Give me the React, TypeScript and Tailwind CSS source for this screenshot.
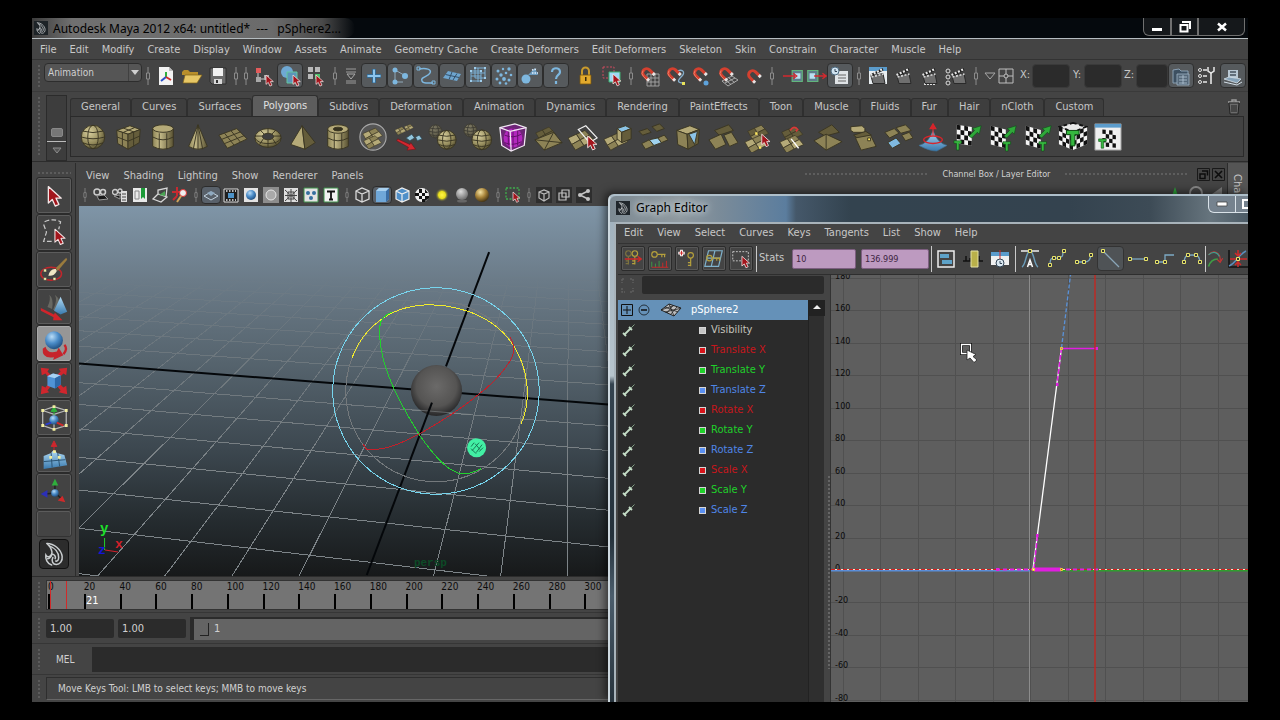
import React from "react";

type Kids = { children?: React.ReactNode };

/* ---------- icon primitives ---------- */

function Ico({ children, s = 24, v = 24 }: Kids & { s?: number; v?: number }) {
  return (
    <svg width={s} height={s} viewBox={`0 0 ${v} ${v}`} fill="none" aria-hidden="true" className="shrink-0">
      {children}
    </svg>
  );
}

function RedArrow({ x, y, k = 1 }: { x: number; y: number; k?: number }) {
  return (
    <path
      transform={`translate(${x} ${y}) scale(${k})`}
      d="M0 0V12.5L3 9.8L5.2 14.8L8 13.5L5.8 8.8H9.8Z"
      fill="#a3151c"
      stroke="#f3e6e6"
      strokeWidth={1}
      strokeLinejoin="round"
    />
  );
}

function MayaLogo({ s = 24 }: { s?: number }) {
  return (
    <Ico s={s}>
      <g stroke="#c9cdcf" strokeWidth={1.3} strokeLinecap="round">
        <path d="M6 3C12 3 18 8 19 14C19.500 18 17 21 14 21C11 21 9.500 18 11 15" />
        <path d="M6 3C9 6 11 9 10 12C9 15 6 15 5 13C4.500 16 6 20 10 21.500" />
        <path d="M8 5C13 7 16 11 16 15C16 17 15 18.500 13.500 18" />
        <path d="M10 12C12 12 14 14 13 16M6.500 16C8 16 9 15 10 13" />
      </g>
    </Ico>
  );
}

function Magnet({ children }: Kids) {
  return (
    <Ico>
      {children}
      <g transform="rotate(-45 9 9)">
        <path d="M5 15V8.500A4 4 0 0 1 13 8.500V15" stroke="#d5402f" strokeWidth={3} />
        <path d="M4 15V9A4.500 4.500 0 0 1 8 4.500" stroke="#f08a72" strokeWidth={0.8} />
        <path d="M3.500 13.200H6.500V16H3.500ZM11.500 13.200H14.500V16H11.500Z" fill="#e4e4e4" />
      </g>
    </Ico>
  );
}

function Clapper({ children, x = 0 }: Kids & { x?: number }) {
  return (
    <Ico>
      {children}
      <g transform={`translate(${x} 0)`}>
        <path d="M5 12L17 9.500L19 19.500H7Z" fill="#6f6f6f" stroke="#2a2a2a" />
        <path d="M4 10.500L16.500 4L17.500 6.500L5 12.500Z" fill="#1c1c1c" />
        <path d="M4.500 11L17 5" stroke="#e8e8e8" strokeWidth={2.200} strokeDasharray="2 1.600" />
        <path d="M5.500 13L17.500 10" stroke="#d8d8d8" strokeWidth={1.600} strokeDasharray="2 1.600" />
      </g>
    </Ico>
  );
}

const K1 = "#b5aa78";
const K2 = "#8d8356";
const K3 = "#655d3b";
const KD = "#3a3522";

function Quad({ x = 0, y = 0, k = 1, a = K1, b = K2 }: { x?: number; y?: number; k?: number; a?: string; b?: string }) {
  return (
    <g transform={`translate(${x} ${y}) scale(${k})`} stroke={KD} strokeWidth={0.9}>
      <path d="M0 6L9 2L13 8L4 13Z" fill={a} />
      <path d="M9 2L18 -2L23 3L13 8Z" fill={b} />
      <path d="M4 13L13 8L17 14L8 19Z" fill={b} />
      <path d="M13 8L23 3L28 9L17 14Z" fill={a} />
    </g>
  );
}

function GlobeShape({ x, y, r, o = 1 }: { x: number; y: number; r: number; o?: number }) {
  return (
    <g transform={`translate(${x} ${y})`} opacity={o} stroke={KD} strokeWidth={1}>
      <circle r={r} fill="url(#khaki)" />
      <ellipse rx={r * 0.45} ry={r} />
      <path d={`M${-r} 0Q0 ${r * 0.3} ${r} 0M${-r * 0.85} ${-r * 0.5}Q0 ${-r * 0.25} ${r * 0.85} ${-r * 0.5}M${-r * 0.85} ${r * 0.5}Q0 ${r * 0.85} ${r * 0.85} ${r * 0.5}`} />
    </g>
  );
}

function Checks({ d, n = 4 }: { d: string; n?: number }) {
  const cells = [];
  for (let i = 0; i < n; i++) for (let j = 0; j < n; j++) if ((i + j) % 2 === 0) cells.push(<rect key={`${i}${j}`} x={i * 4} y={j * 5} width={4} height={5} fill="#111" />);
  return (
    <g transform={d}>
      <rect width={n * 4} height={n * 5} fill="#f4f4f4" />
      {cells}
    </g>
  );
}

const GreenT = ({ x, y, k = 1 }: { x: number; y: number; k?: number }) => (
  <path transform={`translate(${x} ${y}) scale(${k})`} d="M0 0H9V3H6V11H3V3H0Z" fill="#35b83f" stroke="#0e4a14" strokeWidth={0.7} />
);
const GreenArrow = () => <path d="M17 15L23 9L20.500 7L30 4L28 13L26 11L20 17Z" fill="#2fa83a" stroke="#11501a" strokeWidth={0.7} />;

/* ---------- shelf ---------- */

const shelf: [string, React.ReactNode][] = [
  ["Polygon Sphere", <GlobeShape x={16} y={16} r={12.500} />],
  ["Polygon Cube", <g stroke={KD}><path d="M4 9L18 4L29 8L16 13Z" fill={K1} /><path d="M4 9L16 13V29L5 23Z" fill={K2} /><path d="M16 13L29 8L28 22L16 29Z" fill={K3} /><path d="M11 6.500L22 10.500V26M10 11V26M11 11L23 6M4.500 16L16 20.500L28.500 15" /></g>],
  ["Polygon Cylinder", <g stroke={KD}><path d="M5 7V26Q16 32 27 26V7Z" fill="url(#khakiH)" /><ellipse cx={16} cy={7} rx={11} ry={4} fill={K1} /><path d="M5 16Q16 22 27 16M12 12V29M20 12V29" /></g>],
  ["Polygon Cone", <g stroke={KD}><path d="M16 3L6 26Q16 32 26 26Z" fill="url(#khakiH)" /><path d="M16 3L11 29M16 3L16 29M16 3L21 29" /></g>],
  ["Polygon Plane", <g stroke={KD}><path d="M1 14L20 7L31 18L10 28Z" fill={K2} /><path d="M7 12L17 24.500M14 9.500L24 21.500M4 18.500L24 10.500M7 23L28 14.500" /></g>],
  ["Polygon Torus", <g stroke={KD}><ellipse cx={16} cy={17} rx={14} ry={10} fill="url(#khaki)" /><ellipse cx={16} cy={15.500} rx={6} ry={3.500} fill="#3f3f3f" /><path d="M2 17Q5 23 16 23Q27 23 30 17M8 9L12 13M24 9L20 13M16 7V12M7 24L11 18M25 24L21 18M16 27V19M2 15L10 15M30 15L22 15" /></g>],
  ["Polygon Pyramid", <g stroke={KD}><path d="M15 4L3 24L18 29Z" fill={K1} /><path d="M15 4L18 29L29 22Z" fill={K3} /></g>],
  ["Polygon Pipe", <g stroke={KD}><path d="M5 8V26Q16 32 27 26V8Z" fill="url(#khakiH)" /><ellipse cx={16} cy={7.500} rx={11} ry={4.500} fill={K1} /><ellipse cx={16} cy={7.500} rx={5} ry={2} fill="#36321f" /><path d="M5 17Q16 23 27 17M12 12V29M20 12V29" /></g>],
  ["Combine", <g><circle cx={16} cy={16} r={14} fill="#565656" stroke="#a9a9a9" strokeWidth={1.200} /><Quad x={5} y={8} k={0.75} /><Quad x={6} y={16} k={0.68} /></g>],
  ["Extract", <g><Quad x={2} y={6} k={0.42} /><Quad x={12} y={3} k={0.35} /><path d="M14 17L20 13L23 17L18 20ZM24 16L28 14L31 18L26 20Z" fill="#93c6dd" stroke="#2f4b58" strokeWidth={0.8} /><path d="M5 18L18 24L19 22L24 29L15 30L16.500 27L4 20Z" fill="#d3272f" stroke="#701015" strokeWidth={0.6} /></g>],
  ["Mirror Geometry", <g><GlobeShape x={8} y={10} r={7} o={0.4} /><GlobeShape x={20} y={19} r={10} /></g>],
  ["Smooth", <g><GlobeShape x={8} y={9} r={7} o={0.45} /><GlobeShape x={20} y={19} r={10.500} /></g>],
  ["Subdiv Proxy", <g><path d="M2 6L18 2L30 6L28 25L14 31L4 25Z" fill="#6e2577" stroke="#f3e9f5" strokeWidth={1.300} /><circle cx={16} cy={17} r={10} fill="#b227bd" /><path d="M16 7V27M7 14Q16 18 25 13M7 22Q16 26 25 21M11 9V25M21 9V25" stroke="#5f0f68" /><path d="M2 6L13 10L30 6M13 10L14 31" stroke="#f3e9f5" strokeWidth={1.300} /></g>],
  ["Triangulate", <g><Quad x={3} y={7} k={0.78} a={K3} b={K3} /><path d="M2 19L22 11L31 22L12 30Z" fill={K2} stroke={KD} /><path d="M2 19L31 22M12 30L22 11" stroke={KD} /></g>],
  ["Split Polygon", <g><Quad x={0} y={11} k={1} /><path d="M11 8L19 4L31 17L23 22Z" stroke="#f2f2f2" strokeWidth={1.300} /><RedArrow x={21} y={15} /></g>],
  ["Extrude", <g><Quad x={1} y={13} k={0.9} /><path d="M15 7L24 4L30 7L20 11Z" fill="#8cc4e6" stroke={KD} /><path d="M15 7L20 11V22L15 18Z" fill={K1} stroke={KD} /><path d="M20 11L30 7V18L20 22Z" fill={K3} stroke={KD} /></g>],
  ["Bridge", <g><path d="M1 10L10 7L14 11L5 14ZM15 5L23 2L28 7L20 10Z" fill={K3} stroke={KD} /><path d="M4 23L12 19L17 25L8 29ZM21 17L28 14L32 19L25 22Z" fill={K2} stroke={KD} /><path d="M12 19L21 17L25 22L17 25Z" fill="#9fd2ee" stroke={KD} /></g>],
  ["Append", <g stroke={KD}><path d="M4 9L18 4L28 8L15 13Z" fill={K1} /><path d="M4 9L15 13L16 29L5 24Z" fill={K2} /><path d="M15 13L28 8L27 23L16 29Z" fill={K3} /><path d="M17 13L26 10L23 24Z" fill="#8cc4e6" /></g>],
  ["Cut Faces", <g stroke={KD}><path d="M7 9L22 3L27 9L12 14Z" fill={K3} /><path d="M1 19L14 13L19 24L8 29ZM17 14L25 11L32 22L23 26Z" fill={K2} /></g>],
  ["Interactive Split", <g><Quad x={5} y={5} k={0.8} a={K3} b={K2} /><Quad x={2} y={16} k={0.9} /><path d="M13 11H15.500V13.500H13ZM17 26H19.500V28.500H17Z" fill="#ffe860" /><RedArrow x={20} y={13} k={0.9} /></g>],
  ["Insert Edge Loop", <g><Quad x={4} y={6} k={0.8} a={K3} b={K3} /><Quad x={2} y={16} k={0.9} /><path d="M13 9Q17 3 21 8L19 10" stroke="#d9383a" strokeWidth={1.800} /><path d="M14 18L22 28" stroke="#fff" strokeWidth={1.400} /></g>],
  ["Offset Edge", <g stroke={KD}><path d="M6 11L20 3L28 11L13 15Z" fill={K3} /><path d="M1 20L14 13L31 21L14 30Z" fill={K2} /><path d="M14 13V30" /></g>],
  ["Bevel", <g stroke={KD}><path d="M3 5L15 4L18 7V11H6L3 9Z" fill={K1} /><path d="M6 14L19 10L25 14L11 18Z" fill={K3} /><path d="M8 17L24 14L30 26L14 30Z" fill={K2} /><path d="M21 17H24V20H21Z" fill="#ffe860" /></g>],
  ["Merge", <g stroke={KD}><path d="M2 11L12 7L17 12L7 17ZM14 6L24 3L30 9L19 12ZM20 14L28 11L32 17L24 20Z" fill={K2} /><path d="M5 22L14 17L19 23L10 28Z" fill="#7fb9e0" /></g>],
  ["Sculpt Geometry", <g><path d="M1 25Q12 22 16 9Q20 22 31 25L20 31Q12 31 1 25Z" fill="url(#blueV)" stroke="#3f6f92" strokeWidth={0.7} /><ellipse cx={16} cy={19} rx={10} ry={4} stroke="#d8252b" strokeWidth={1.500} /><path d="M16 14V5M13 7L16 2L19 7Z" stroke="#d8252b" fill="#d8252b" strokeWidth={1.300} /></g>],
  ["Planar Mapping", <g><Checks d="translate(4 3) skewY(8)" /><GreenArrow /><GreenT x={1} y={20} k={0.9} /></g>],
  ["Cylindrical Mapping", <g><Checks d="translate(3 4) skewY(14)" /><GreenArrow /><GreenT x={16} y={21} k={0.9} /></g>],
  ["Spherical Mapping", <g><Checks d="translate(3 4) skewY(16)" /><GreenArrow /><GreenT x={17} y={21} k={0.9} /></g>],
  ["Automatic Mapping", <g><Checks d="translate(1 5) skewY(22) scale(.94)" /><Checks d="translate(16 11) skewY(-22) scale(.94)" /><path d="M16 1L30 5L16 11L2 5Z" fill="#e9e9e9" stroke="#111" strokeWidth={2} strokeDasharray="4 3" /><GreenT x={9} y={9} k={1.500} /></g>],
  ["UV Texture Editor", <g><path d="M2 2H30V30H2Z" fill="#efefef" stroke="#8a8a8a" /><path d="M2 2H30V6H2Z" fill="#5b9ccc" /><Checks d="translate(10 8) skewY(6) scale(.9)" /><GreenT x={6} y={18} k={0.9} /></g>],
];

/* ---------- status line ---------- */

const W = "#e6e6e6";
const B = "#7db7df";

const icons: Record<string, React.ReactNode> = {
  "New Scene": <Ico><path d="M5 3H15L19 7V21H5Z" fill="#f3f3f3" /><path d="M15 3V7H19Z" fill="#bdbdbd" /><path d="M12 8V13" stroke="#2fae3c" strokeWidth={2} /><path d="M12 13L7 17" stroke="#2b50c8" strokeWidth={2} /><path d="M12 13L17 16" stroke="#d02a2a" strokeWidth={2} /></Ico>,
  "Open Scene": <Ico><path d="M2 8L4 6H8L10 8H18V11H2Z" fill="#b98f2b" /><path d="M5 11H22L17 19H3Z" fill="#e7c765" stroke="#7f6119" strokeWidth={0.700} /></Ico>,
  "Save Scene": <Ico><path d="M4 4H20V20H6L4 18Z" fill="#6a6a6a" stroke="#2c2c2c" /><path d="M7 4H17V12H7Z" fill="#f1f1f1" /><path d="M8 15H16V20H8Z" fill="#d8d8d8" /><path d="M10 16H12V19H10Z" fill="#333" /></Ico>,
  "Select by Hierarchy": <Ico><path d="M4 4H9V9H4Z" fill="#e25b5b" /><path d="M4 13H9V18H4ZM12 11H17V16H12Z" fill="#a9a9a9" /><path d="M6 9V13M9 15H12" stroke="#ccc" /><RedArrow x={14} y={11} k={0.75} /></Ico>,
  "Select by Object": <Ico><circle cx={9} cy={8} r={6} fill="#6fa9d4" /><path d="M9 8H19V19H9Z" fill="#5c95b8" stroke="#63c7a0" /><RedArrow x={15} y={11} k={0.75} /></Ico>,
  "Select by Component": <Ico><path d="M4 3H9V8H4ZM11 3H16V8H11ZM4 10H9V15H4Z" fill="#b9b9b9" /><path d="M11 10H16V15H11Z" fill="#4cc06a" /><RedArrow x={12} y={11} k={0.75} /></Ico>,
  Collapse: <Ico s={18} v={18}><path d="M4 2H14M4 5H14M4 14H14M4 16H14" stroke="#9b9b9b" /><path d="M5 7H13L9 12Z" stroke="#aaa" /></Ico>,
  Handles: <Ico><path d="M12 5V19M5 12H19" stroke="#356a92" strokeWidth={4} /><path d="M12 5.500V18.500M5.500 12H18.500" stroke="#8cc4ec" strokeWidth={2} /></Ico>,
  Joints: <Ico><path d="M7 6V18M7 6L16 11M7 18H15" stroke="#8fa9bb" /><circle cx={7} cy={6} r={2.500} fill={B} /><circle cx={17} cy={12} r={3} fill={B} /><circle cx={7} cy={18} r={2.500} fill={B} /></Ico>,
  Curves: <Ico><path d="M5 5C12 4 18 5 16 9C14 13 6 13 8 17C9 20 14 19 19 19" stroke={B} strokeWidth={1.500} /><path d="M3 3H6V6H3ZM18 17H21V20H18Z" stroke={B} /></Ico>,
  Surfaces: <Ico><path d="M3 14L8 7L21 10L17 17Z" fill="#6ea5cf" /><path d="M5.500 10.500L19 13.500M12 8L9 15.500M17 9.500L13 16" stroke="#34506a" /></Ico>,
  Deformations: <Ico><path d="M5 7H15V17H5ZM9 4H19V14H9ZM5 12H15M12 4V18M5 9H19" stroke={B} strokeWidth={0.900} /><path d="M4 6H6V8H4ZM14 6H16V8H14ZM4 16H6V18H4ZM14 16H16V18H14ZM18 3H20V5H18ZM18 13H20V15H18ZM8 3H10V5H8Z" fill="#9fcdec" /></Ico>,
  Dynamics: <Ico><g fill={B}><circle cx={6} cy={7} r={1.500} /><circle cx={11} cy={5} r={1.200} /><circle cx={17} cy={5} r={1.700} /><circle cx={9} cy={11} r={1.700} /><circle cx={14} cy={9} r={1.300} /><circle cx={19} cy={11} r={1.300} /><circle cx={5} cy={15} r={1.500} /><circle cx={12} cy={15} r={1.900} /><circle cx={17} cy={16} r={1.500} /><circle cx={8} cy={19} r={1.400} /><circle cx={14} cy={19.500} r={1.300} /></g></Ico>,
  Rendering: <Ico><circle cx={8} cy={15} r={4.500} fill={B} /><path d="M10 11L17 4L20 11Z" fill="#6c9cc0" /><path d="M14 6L19 5M14 9L20 9" stroke="#dff0ff" strokeDasharray="1.500 1" strokeWidth={1.500} /></Ico>,
  Misc: <Ico><path d="M8 8C8 3 16 3 16 8C16 11 12 11 12 15M12 17V20" stroke={B} strokeWidth={2.200} /></Ico>,
  Lock: <Ico><path d="M8 11V7A3.500 3.500 0 0 1 15 7V11" stroke="#c99a2c" strokeWidth={2} /><path d="M6 11H17V20H6Z" fill="#e2a92c" stroke="#7a5510" strokeWidth={0.800} /><path d="M11 13H12.500V17H11Z" fill="#3b2a08" /></Ico>,
  Highlight: <Ico><path d="M3 3H14V14H3Z" stroke="#d04a5f" strokeDasharray="2 1.500" /><path d="M9 8H20V18H9Z" fill="#9fd7f3" stroke="#3fb071" /><RedArrow x={13} y={10} k={0.800} /></Ico>,
  "Snap to Grids": <Magnet><path d="M9 10H21V22H9ZM13 10V22M17 10V22M9 14H21M9 18H21" stroke="#a7a7a7" strokeWidth={0.900} /></Magnet>,
  "Snap to Curves": <Magnet><path d="M12 8C18 4 22 8 18 12C14 16 12 19 20 19" stroke="#86aecb" strokeWidth={1.300} /><path d="M18 18H21V21H18Z" fill="#e8e35a" /></Magnet>,
  "Snap to Points": <Magnet><circle cx={16} cy={19} r={2.500} fill="#5ea3dc" /></Magnet>,
  "Snap to Planes": <Magnet><path d="M6 17L16 12L22 16L12 22ZM9 15.500L15 20.500M12.500 13.500L18.500 18.500M9 19L19 14" stroke="#b3b3b3" strokeWidth={0.900} /></Magnet>,
  "Make Live": <Ico><g transform="translate(2 2) rotate(-45 9 9)"><path d="M5 15V8.500A4 4 0 0 1 13 8.500V15" stroke="#d5402f" strokeWidth={3} /><path d="M3.500 13.200H6.500V16H3.500ZM11.500 13.200H14.500V16H11.500Z" fill="#e4e4e4" /></g></Ico>,
  Inputs: <Ico s={22}><path d="M10 6H21V18H10Z" fill="#5f7d8c" stroke="#62b67c" strokeWidth={1.300} /><path d="M13 9H19V15H13Z" fill="#b9dff0" /><path d="M0 12H13M11 9L15 12L11 15" stroke="#d3292e" strokeWidth={1.500} /></Ico>,
  Outputs: <Ico s={22}><path d="M3 6H14V18H3Z" fill="#5f7d8c" stroke="#62b67c" strokeWidth={1.300} /><path d="M5 9H11V15H5Z" fill="#b9dff0" /><path d="M10 12H23M19 9L23 12L19 15" stroke="#d3292e" strokeWidth={1.500} /></Ico>,
  "Construction History": <Ico><path d="M7 7H20V20H7Z" fill="#dfe3e6" /><path d="M10 11H18M10 14H18M10 17H18" stroke="#666" /><circle cx={7} cy={7} r={4} fill="#cfe2ef" stroke="#4c6a80" /><path d="M7 5V7.500H9" stroke="#345" /></Ico>,
  "Render View": <Clapper><path d="M3 3H21V20H3Z" fill="#e9eef1" /><path d="M3 3H21V7H3Z" fill="#5b9ccc" /></Clapper>,
  "Render Frame": <Clapper />,
  "IPR Render": <Clapper><path d="M6 20H18" stroke="#ddd" strokeWidth={2} strokeDasharray="2 1" /></Clapper>,
  "Render Settings": <Clapper x={3}><circle cx={4} cy={7} r={2} stroke="#ddd" /><circle cx={4} cy={13} r={2} stroke="#ddd" /><circle cx={4} cy={19} r={2} stroke="#ddd" /></Clapper>,
  "Input Mode": <Ico s={12} v={12}><path d="M1 3H11L6 9Z" stroke="#a7a7a7" /></Ico>,
  Absolute: <Ico s={16} v={16}><path d="M1 1H15V15H1ZM8 1V15M1 8H15" stroke="#bdbdbd" /><circle cx={8} cy={8} r={2} fill="#444" stroke="#bdbdbd" /></Ico>,
  "Channel Box": <Ico><path d="M4 6L10 5L12 7H19V19H4Z" fill="#3d5061" stroke="#8aa0b3" /><path d="M8 10H20V21H8Z" fill="#56697a" stroke="#9fb3c4" strokeWidth={0.800} /><path d="M10 13H18M10 16H18M10 19H18M14 11V20" stroke="#b4c6d5" strokeWidth={0.800} /></Ico>,
  "Tool Settings": <Ico><circle cx={5} cy={6} r={1.500} stroke={W} /><circle cx={5} cy={12} r={1.500} stroke={W} /><circle cx={5} cy={18} r={1.500} stroke={W} /><path d="M8 6H12M8 12H12M8 18H12M16 8V20" stroke={W} strokeWidth={1.600} /><path d="M13 3V7L16 9L19 7V3" stroke={W} strokeWidth={1.500} /></Ico>,
  "Attribute Editor": <Ico><path d="M7 6H17V14H7Z" fill="#b8c7d3" /><path d="M9 8H15M9 11H15" stroke="#44525e" strokeWidth={1.300} /><path d="M3 15L8 13L20 15L16 19Z" fill="#86a2b8" stroke="#d4dfe8" strokeWidth={0.800} /><path d="M3 18L16 21L21 18" stroke="#d4dfe8" /></Ico>,
};

const Handle = ({ w = "w-[12px]" }: { w?: string }) => (
  <span className={`${w} flex shrink-0 justify-center`}>
    <Ico s={18} v={18}>
      <path d="M9 0V18" stroke="#8b8b8b" />
      <path d="M7.500 6H10.500V12H7.500Z" fill="#444" stroke="#8b8b8b" />
    </Ico>
  </span>
);

function Tool({ n, w = "w-[26px]", on = false, extra = "" }: { n: string; w?: string; on?: boolean; extra?: string }) {
  return (
    <button
      type="button"
      aria-label={n}
      className={`${w} ${extra} flex h-[25px] shrink-0 items-center justify-center rounded-sm ${on ? "border border-[#2e2e2e] bg-[#565a5d]" : ""}`}
    >
      {icons[n]}
    </button>
  );
}

const VGrip = () => (
  <span className="mx-[5px] my-1 w-[4px] shrink-0 self-stretch bg-[radial-gradient(#5c5c5c_1px,transparent_1px)] bg-[length:4px_4px]" />
);

function CoordField({ axis, cls }: { axis: string; cls: string }) {
  return (
    <label className="flex items-center text-[11px] text-[#c8c8c8]">
      <span className="w-[14px] text-center">{axis}:</span>
      <input className={`${cls} h-[24px] rounded-sm border border-[#3a3a3a] bg-[#2b2b2b] px-1`} />
    </label>
  );
}

function StatusLine() {
  return (
    <div className="flex h-[33px] shrink-0 items-center border-t border-[#333] border-b border-b-[#3a3a3a]">
      <VGrip />
      <span className="relative mt-[3px] -ml-[2px] flex h-[19px] shrink-0 self-start">
        <select aria-label="Menu set" className="h-[19px] w-[98px] appearance-none rounded-sm border border-[#2d2d2d] bg-[#555] px-[3px] text-[10px] leading-[15px] text-[#d0d0d0]">
          <option>Animation</option>
        </select>
        <svg viewBox="0 0 14 19" className="pointer-events-none absolute top-0 right-0 h-[19px] w-[14px]" aria-hidden="true">
          <path d="M0 1V18" stroke="#2d2d2d" />
          <path d="M3 7H11L7 12Z" fill="#d0d0d0" />
        </svg>
      </span>
      <Handle w="w-[11px]" />
      <Tool n="New Scene" />
      <Tool n="Open Scene" />
      <Tool n="Save Scene" />
      <Handle w="w-[10px]" />
      <Handle w="w-[10px]" />
      <Tool n="Select by Hierarchy" />
      <Tool n="Select by Object" on />
      <Tool n="Select by Component" />
      <Handle />
      <Tool n="Collapse" w="w-[20px]" />
      {["Handles", "Joints", "Curves", "Surfaces", "Deformations", "Dynamics", "Rendering", "Misc"].map((n) => (
        <Tool key={n} n={n} on />
      ))}
      <Tool n="Lock" extra="ml-[4px]" />
      <Tool n="Highlight" />
      <Handle />
      {["Snap to Grids", "Snap to Curves", "Snap to Points", "Snap to Planes", "Make Live"].map((n) => (
        <Tool key={n} n={n} />
      ))}
      <Handle w="w-[10px]" />
      <Tool n="Inputs" w="w-[22px]" extra="ml-[6px]" />
      <Tool n="Outputs" w="w-[22px]" />
      <Tool n="Construction History" on />
      <Handle />
      {["Render View", "Render Frame", "IPR Render", "Render Settings"].map((n) => (
        <Tool key={n} n={n} />
      ))}
      <Handle w="w-[14px]" />
      <Tool n="Input Mode" w="w-[14px]" />
      <Tool n="Absolute" w="w-[18px]" />
      <div className="ml-[3px] flex">
        <CoordField axis="X" cls="w-[38px]" />
        <CoordField axis="Y" cls="w-[38px]" />
        <CoordField axis="Z" cls="w-[32px]" />
      </div>
      <Tool n="Channel Box" on />
      <Tool n="Tool Settings" />
      <Tool n="Attribute Editor" on />
    </div>
  );
}

const shelfTabs = ["General", "Curves", "Surfaces", "Polygons", "Subdivs", "Deformation", "Animation", "Dynamics", "Rendering", "PaintEffects", "Toon", "Muscle", "Fluids", "Fur", "Hair", "nCloth", "Custom"];

function Shelf() {
  return (
    <div className="flex h-[70px] shrink-0 border-b border-[#2c2c2c]">
      <VGrip />
      <div className="mt-[3px] flex w-[21px] shrink-0 flex-col items-center justify-end border border-[#2b2b2b] bg-[#3d3d3d]">
        <span className="h-[9px] w-[12px] rounded-[2px] border border-[#888] bg-[#777]" />
        <span className="mt-[4px] h-px w-full bg-[#bbb]" />
        <Ico s={18} v={18}><path d="M5 6H13L9 11Z" stroke="#8d8d8d" fill="#555" /></Ico>
      </div>
      <div className="flex min-w-0 flex-1 flex-col pt-[3px] pr-[4px] pl-[3px]">
        <div className="flex h-[21px] items-end">
          {shelfTabs.map((t) => (
            <button
              key={t}
              type="button"
              className={`shrink-0 rounded-t-[3px] border border-b-0 border-[#2f2f2f] px-[10px] text-[11px] ${t === "Polygons" ? "h-[21px] bg-[#5d5d5d] text-[#e0e0e0]" : "h-[18px] bg-[#3e3e3e] text-[#c6c6c6]"}`}
            >
              {t}
            </button>
          ))}
          <span className="ml-auto self-center pr-[1px]">
            <Ico s={18} v={18}><path d="M3 5H15M7 5V3H11V5" stroke="#9c9c9c" strokeWidth={1.500} /><path d="M4 6H14L13 17H5Z" fill="#6b6b6b" stroke="#222" /><path d="M7 8V15M9 8V15M11 8V15" stroke="#222" /></Ico>
          </span>
        </div>
        <div className="flex h-[41px] items-center border border-[#2a2a2a] bg-[#424242] pl-[4px]">
          {shelf.map(([n, g]) => (
            <button key={n} type="button" aria-label={n} className="flex w-[35px] shrink-0 justify-center">
              <Ico s={30} v={32}>{g}</Ico>
            </button>
          ))}
        </div>
      </div>
    </div>
  );
}

/* ---------- toolbox ---------- */

const toolbox: [string, React.ReactNode][] = [
  ["Select Tool", <RedArrow x={11} y={7} k={1.400} />],
  ["Lasso Tool", <g><path d="M7 5Q16 1 24 5L22 13M6 8L9 16L6 26H16" stroke="#c9c9c9" strokeWidth={1.300} strokeDasharray="5 2.500" /><RedArrow x={18} y={13} k={1.100} /></g>],
  ["Paint Selection Tool", <g><ellipse cx={14} cy={21} rx={11} ry={7} stroke="#c2262c" strokeWidth={1.600} /><path d="M19 15L30 4L31 6L21 18Z" fill="#9a7b3d" /><path d="M11 23Q13 15 19 16L20 18Q17 24 11 23Z" fill="#efe6c4" /><path d="M6 16H9V19H6ZM6 25H9V28H6ZM16 25H19V28H16Z" fill="#f5efad" stroke="#333" strokeWidth={0.500} /></g>],
  ["Move Tool", <g><path d="M10 17Q14 9 12 4Q17 8 15 19M16 20Q21 10 18 4Q25 9 22 22" fill="#77776f" opacity={0.700} /><path d="M24 6L17 21L24 25L31 22Z" fill="url(#blueV)" /><path d="M3 18L17 25L18 23L26 31L16 31L16.500 28L3 21Z" fill="#d1242b" /></g>],
  ["Rotate Tool", <g><path d="M5 22Q4 33 17 31L16 34L27 29L22 21L20 25Q10 28 8 20Z" fill="#c7232b" /><path d="M28 18Q32 22 27 28" stroke="#c7232b" strokeWidth={2.500} /><circle cx={17} cy={13} r={9.500} fill="url(#blueR)" /></g>],
  ["Scale Tool", <g><path d="M3 3L12 4L10 7L14 11L11 13L8 9L4 11ZM31 3L22 4L24 7L20 11L23 13L27 9L30 11ZM3 31L12 29L10 27L14 22L11 20L8 24L4 22ZM31 31L22 29L24 27L20 22L23 20L27 24L30 22Z" fill="#cf262d" /><path d="M10 12L16 9L24 11V21L18 25L10 22Z" fill="#4f93d6" /><path d="M10 12L16 9L24 11L18 14Z" fill="#a6d1f3" /><path d="M18 14L24 11V21L18 25Z" fill="#2d68a8" /></g>],
  ["Universal Manipulator", <g><path d="M5 9L17 5L30 9V25L17 29L5 25ZM5 9L17 13L30 9M17 13V29" stroke="#b9b9b9" strokeWidth={1.300} /><circle cx={17} cy={19} r={5} fill="url(#blueR)" /><path d="M17 14V8M14 10L17 5L20 10Z" fill="#2fae3c" stroke="#2fae3c" /><path d="M20 22L27 25" stroke="#d02a2a" strokeWidth={2} /><path d="M14 22L8 24" stroke="#2b3fd0" strokeWidth={2} /><path d="M3.500 7.500H6.500V10.500H3.500ZM15.500 3.500H18.500V6.500H15.500ZM28.500 7.500H31.500V10.500H28.500ZM3.500 23.500H6.500V26.500H3.500ZM28.500 23.500H31.500V26.500H28.500ZM15.500 27.500H18.500V30.500H15.500Z" fill="#f2efa0" /></g>],
  ["Soft Modification Tool", <g><path d="M6 18L14 15Q17 9 20 15L28 17L31 28L6 32Z" fill="url(#blueV)" /><path d="M6 24L29 22M14 15L15 30M21 15L23 29" stroke="#28506f" /><path d="M17 13V6M14 8L17 2L20 8Z" fill="#cf262d" stroke="#cf262d" /><path d="M16 12H19V15H16ZM12 18H15V21H12ZM21 18H24V21H21Z" fill="#f2efa0" /></g>],
  ["Show Manipulator Tool", <g><path d="M18 18V7M18 18L8 19M18 18L26 25" stroke="#222" strokeWidth={1.600} /><circle cx={18} cy={18} r={4} fill="url(#blueR)" /><path d="M14.500 10L18 3L21.500 10Z" fill="#2fae3c" /><path d="M3 19L10 15V23Z" fill="#2b2fb8" /><path d="M29 28L21 26L26 21Z" fill="#d02a2a" /></g>],
];

function Toolbox() {
  return (
    <div className="flex w-[44px] shrink-0 flex-col border-r border-[#2c2c2c] pr-[4px] pl-[5px]">
      <span className="mt-[8px] mb-[3px] h-[4px] w-[34px] shrink-0 bg-[radial-gradient(#5c5c5c_1px,transparent_1px)] bg-[length:4px_4px]" />
      <div className="flex flex-col gap-[2px]">
        {toolbox.map(([n, g]) => (
          <button key={n} type="button" aria-label={n} className={`flex h-[35px] w-[34px] items-center justify-center rounded-[2px] border ${n === "Rotate Tool" ? "border-[#aaa] bg-[#969696]" : "border-[#5c5c5c] bg-[#434343]"} outline outline-[#2b2b2b]`}>
            <Ico s={32} v={34}>{g}</Ico>
          </button>
        ))}
        <span className="h-[25px] w-[34px] rounded-[2px] border border-b-0 border-[#5c5c5c] outline outline-[#333]" />
      </div>
      <button type="button" aria-label="Home" className="mt-[3px] ml-[2px] flex size-[30px] shrink-0 items-center justify-center rounded-sm border border-[#111] bg-[#2c2c2c]">
        <MayaLogo s={28} />
      </button>
    </div>
  );
}

/* ---------- perspective panel ---------- */

const vpIcons: (React.ReactNode | null)[] = [
  null,
  <g><circle cx={5} cy={5} r={3} stroke="#ccc" strokeWidth={1.500} /><circle cx={11} cy={5} r={2.500} stroke="#ccc" strokeWidth={1.500} /><path d="M5 9L12 8L16 12L7 13Z" fill="#191919" stroke="#999" /></g>,
  <g><circle cx={3} cy={5} r={2.500} stroke="#ccc" strokeWidth={1.300} /><circle cx={8} cy={4} r={2} stroke="#ccc" strokeWidth={1.300} /><path d="M2 9L8 8V12Z" fill="#191919" stroke="#999" /><path d="M9 4H15V15H9Z" fill="#ddd" /><path d="M10 7H14M10 10H14M10 13H14" stroke="#444" /></g>,
  <g><path d="M1 1H15V15H1Z" fill="#e9e9e9" /><path d="M3 4H7V12H3Z" stroke="#888" /><path d="M9 1H13V12L11 10L9 12Z" fill="#1b9a37" /></g>,
  <g><path d="M1 12L6 7L15 10L9 15ZM6 7V3L15 1L14 10" stroke="#d8d8d8" strokeWidth={1.300} /><path d="M7 8L13 4V9Z" fill="#49a352" /></g>,
  <g><path d="M5 0V9M0 5H9M1 13L5 9" stroke="#c62a30" strokeWidth={2} /><circle cx={11} cy={6} r={3.500} fill="#efefef" stroke="#d33" /><path d="M5 15L9 9" stroke="#d0a45a" strokeWidth={2} /></g>,
  null,
  <g><path d="M1 9L8 5L15 9L8 13Z" stroke="#c3d3e0" /><path d="M4 6L8 4L12 6L8 9Z" fill="#8fa9bf" /></g>,
  <g><path d="M1 2H15V15H1Z" fill="#1f1f1f" stroke="#ddd" /><path d="M3 4H13M3 13H13" stroke="#eee" strokeWidth={1.500} strokeDasharray="1.500 1.500" /><path d="M5 6H11V11H5Z" fill="#4d93c8" /></g>,
  <g><path d="M1 1H15V15H1Z" fill="#e3e3e3" /><circle cx={8} cy={8} r={5} fill="url(#blueR)" /></g>,
  <g><path d="M0 0H16V16H0Z" fill="#8d8d8d" /><circle cx={8} cy={8} r={5} fill="#a9a9a9" stroke="#e4e4e4" /></g>,
  <g><path d="M1 1H15V15H1Z" fill="#dedede" /><path d="M2 3L14 14M14 3L2 14M8 2V15M2 8.500H14M5 5H11V12H5Z" stroke="#444" /></g>,
  <g><path d="M1 1H15V15H1Z" fill="#e3e3e3" stroke="#3f8f4a" /><circle cx={5} cy={6} r={2} fill="#356f9f" /><circle cx={11} cy={6} r={2} fill="#356f9f" /><circle cx={8} cy={11} r={2} fill="#356f9f" /></g>,
  <g><path d="M1 1H15V15H1Z" fill="#f1f1f1" stroke="#3f8f4a" /><path d="M4 4.500H12M8 4V13M6 12.500H10" stroke="#111" strokeWidth={1.800} /></g>,
  null,
  <g><path d="M2 4L8 1L15 4V12L8 15L2 12ZM2 4L8 7L15 4M8 7V15" stroke="#d9d9d9" strokeWidth={1.300} /></g>,
  <g><path d="M2 4L5 1H15V12L12 15H2Z" fill="#6fa7d8" /><path d="M12 4L15 1V12L12 15Z" fill="#3a6ea5" /><path d="M2 4L5 1H15L12 4Z" fill="#a9d0ee" /></g>,
  <g><path d="M2 4L8 1L15 4V12L8 15L2 12Z" fill="#4f8fc9" /><path d="M2 4L8 1L15 4V12L8 15L2 12ZM2 4L8 7L15 4M8 7V15" stroke="#eee" strokeWidth={1.200} /></g>,
  <g><circle cx={8} cy={8} r={7} fill="#eee" /><path d="M5 2H8V6H5ZM11 2L14 6H11ZM1 6H5V9H1ZM8 6H11V9H8ZM5 9H8V12H5ZM11 9H15V11L11 14ZM8 12H11V15H8Z" fill="#111" /></g>,
  <circle cx={8} cy={8} r={7} fill="url(#sun)" />,
  <g><ellipse cx={8} cy={14} rx={5} ry={1.500} fill="#666" /><circle cx={8} cy={7} r={6} fill="url(#grayR)" /></g>,
  <g><circle cx={8} cy={8} r={7} fill="url(#gold)" /></g>,
  null,
  <g><path d="M1 1H14V12H1Z" stroke="#3fae4c" strokeDasharray="2 1.500" strokeWidth={1.300} /><RedArrow x={8} y={5} k={0.700} /></g>,
  null,
  <g><path d="M0 0H16V16H0Z" fill="#2e2e2e" /><path d="M3 5L8 3L13 5V11L8 14L3 11ZM3 5L8 7L13 5M8 7V14" stroke="#bbb" strokeWidth={1.200} /></g>,
  <g><path d="M0 0H16V16H0Z" fill="#2e2e2e" /><path d="M3 6H10V13H3ZM6 3H13V10H6Z" stroke="#c4c4c4" strokeWidth={1.200} /></g>,
  <g><path d="M0 0H16V16H0Z" fill="#2e2e2e" /><circle cx={4} cy={8} r={2} fill="#c4c4c4" /><circle cx={12} cy={4} r={2} fill="#c4c4c4" /><circle cx={12} cy={12} r={2} fill="#c4c4c4" /><path d="M4 8L12 4M4 8L12 12" stroke="#c4c4c4" strokeWidth={1.500} /></g>,
];

const VPX = 567;
const VPY = 44;
const VQX = -4080;
const VQY = 41;
const farSlope = (252 - VQY) / (488 - VQX);

function gridLines() {
  const out: React.ReactNode[] = [];
  for (let k = -14; k <= 12; k++) {
    if (k === 0) continue;
    const bx = 365.500 + 67 * k;
    const dx = (bx - VPX) / (575 - VPY);
    const y = (VQY + farSlope * (VPX - VQX) - farSlope * dx * VPY) / (1 - farSlope * dx);
    out.push(<path key={`a${k}`} d={`M${VPX + dx * (y - VPY)} ${y}L${bx} 575`} />);
  }
  for (let k = -12; k <= 12; k++) {
    if (k === 0) continue;
    const h = 1 / (0.003106 + 0.000175 * k);
    const s = h / (79 - VQX);
    out.push(<path key={`b${k}`} d={`M79 ${VQY + h}L607 ${VQY + h + s * 528}`} />);
  }
  return out;
}

function Viewport() {
  return (
    <div className="min-h-0 flex-1 overflow-hidden bg-[linear-gradient(to_bottom,#7f95a7_0%,#6b7b88_20%,#56646e_42%,#3c474f_66%,#262d31_84%,#17191a_100%)]">
      <svg className="h-full w-full" viewBox="79 206 528 369" preserveAspectRatio="xMinYMin meet" fill="none" role="img" aria-label="Perspective view with a sphere and rotate manipulator">
        <defs>
          <linearGradient id="fade" x1="0" y1="206" x2="0" y2="575" gradientUnits="userSpaceOnUse">
            <stop offset="0.190" stopColor="#fff" stopOpacity="0" />
            <stop offset="0.240" stopColor="#fff" stopOpacity="0.250" />
            <stop offset="0.450" stopColor="#fff" stopOpacity="0.650" />
            <stop offset="0.700" stopColor="#fff" stopOpacity="1" />
          </linearGradient>
          <mask id="gridMask" maskUnits="userSpaceOnUse" x="79" y="206" width="528" height="369">
            <rect x="79" y="206" width="528" height="369" fill="url(#fade)" />
          </mask>
          <radialGradient id="ball" cx="0.500" cy="0.420" r="0.560">
            <stop offset="0" stopColor="#6b6a69" />
            <stop offset="0.700" stopColor="#555453" />
            <stop offset="1" stopColor="#2b2b2c" />
          </radialGradient>
        </defs>
        <g mask="url(#gridMask)" stroke="#7d8488" strokeWidth={1} shapeRendering="crispEdges">
          {gridLines()}
        </g>
        <g stroke="#04070a" strokeWidth={2}>
          <path d="M79 363L607 404" />
          <path d="M488 252L445 366" />
        </g>
        <circle cx={435.500} cy={390} r={25.500} fill="url(#ball)" />
        <path d="M410 409L470 414" stroke="#8d9396" opacity={0.500} />
        <path d="M431 402L366 574" stroke="#04070a" strokeWidth={2} />
        <g strokeWidth={1} shapeRendering="crispEdges">
          <circle cx={435} cy={391} r={90} stroke="#74797c" />
          <path d="M351.500 357C360 335 372 325 382 318C397 308 412 304.500 430 304.500C472 306 500 324 514 348C526 368 531 398 520 423" stroke="#f2ec2c" />
          <path d="M391 312Q380 316 379 326C377 362 396 398 419 435C433 455 444 466 452 470C462 476 472 472 480 468" stroke="#22d12d" />
          <path d="M509 337C514 345 514 352 508 362C500 374 490 385 476 395C458 410 440 421 419 433C400 443 384 450 366 449L362 443" stroke="#c2202a" />
          <circle cx={435} cy={390.500} r={103} stroke="#77d5ee" />
        </g>
        <circle cx={475.500} cy={447} r={9.500} fill="#42f0a4" />
        <path d="M470 446L473 442M471 450L478 442M475 452L481 444M474 443L479 449M470 448L475 453M478 451L482 447" stroke="#156b4c" strokeWidth={0.900} />
        <path d="M104.500 549V537" stroke="#22d12d" />
        <path d="M105 549L118 551" stroke="#d2202a" />
        <g fontFamily="Liberation Mono, monospace" fontWeight="700">
          <text x="100" y="532" fontSize="14" fill="#1de02a">y</text>
          <text x="115" y="547" fontSize="13" fill="#d2202a">x</text>
          <text x="98" y="553" fontSize="13" fill="#1414d8">z</text>
          <text x="413" y="565" fontSize="11" fill="#0c4a26">persp</text>
        </g>
      </svg>
    </div>
  );
}

function PanelArea() {
  return (
    <div className="flex min-w-0 flex-1 flex-col pl-[3px]">
      <div className="flex h-[21px] shrink-0 items-end gap-[14px] pl-[7px] text-[11px] leading-[16px] text-[#c8c8c8]">
        {["View", "Shading", "Lighting", "Show", "Renderer", "Panels"].map((t) => (
          <button key={t} type="button">{t}</button>
        ))}
      </div>
      <div className="flex h-[22px] shrink-0 items-center">
        {vpIcons.map((g, i) =>
          g === null ? (
            <span key={i} className="flex w-[11px] shrink-0 justify-center overflow-hidden">
              <Ico s={14} v={18}><path d="M9 0V18" stroke="#8b8b8b" /><path d="M7.500 6H10.500V12H7.500Z" fill="#444" stroke="#8b8b8b" /></Ico>
            </span>
          ) : (
            <button key={i} type="button" aria-label={`View option ${i}`} className={`flex h-[18px] w-[20px] shrink-0 items-center justify-center ${i === 7 || i === 16 ? "rounded-sm border border-[#2c2c2c] bg-[#59616a]" : ""}`}>
              <Ico s={16} v={16}>{g}</Ico>
            </button>
          ),
        )}
      </div>
      <Viewport />
    </div>
  );
}

function ChannelBox() {
  const dots = "h-[4px] bg-[radial-gradient(#5e5e5e_1px,transparent_1px)] bg-[length:4px_4px]";
  return (
    <div className="flex w-[448px] shrink-0">
      <div className="min-w-0 flex-1">
        <div className="flex h-[22px] items-center gap-[14px] pr-[2px] pl-[4px]">
          <span className={`${dots} flex-1`} />
          <span className="pt-px text-[9px] text-[#d2d2d2]">Channel Box / Layer Editor</span>
          <span className={`${dots} flex-1`} />
          <span className="-ml-[6px] flex gap-[2px]">
            <button type="button" aria-label="Float panel"><Ico s={13} v={13}><path d="M.5.5H12.500V12.500H.5Z" stroke="#191919" /><path d="M3 6H8V10.500H3ZM5 3H10.500V7.500" stroke="#0c0c0c" strokeWidth={1.500} /></Ico></button>
            <button type="button" aria-label="Close panel"><Ico s={13} v={13}><path d="M.5.5H12.500V12.500H.5Z" stroke="#191919" /><path d="M3 3L10 10M10 3L3 10" stroke="#0c0c0c" strokeWidth={1.600} /></Ico></button>
          </span>
        </div>
        <div className="flex justify-end gap-[5px] pr-[2px]">
          <Ico s={16} v={16}><path d="M8 2L12 14H4Z" fill="#2da53a" /></Ico>
          <Ico s={16} v={16}><circle cx={8} cy={8} r={6} stroke="#8a8a8a" strokeWidth={2} /></Ico>
          <Ico s={16} v={16}><path d="M3 9L13 2V14Z" fill="#7d7d7d" /></Ico>
        </div>
      </div>
      <div className="w-[21px] border-l border-[#2c2c2c] bg-[#555] pt-[11px]">
        <button type="button" className="text-[11px] leading-[18px] text-[#c4c4c4] [writing-mode:vertical-rl]">Channel Box</button>
      </div>
    </div>
  );
}

/* ---------- bottom bars ---------- */

function TimeSlider() {
  return (
    <div className="flex h-[36px] shrink-0 border-t border-[#2c2c2c]">
      <VGrip />
      <div className="relative mt-[3px] mb-[2px] flex-1 border border-[#333] bg-[#747474] text-[10px] leading-[12px] text-[#0c0c0c]">
        <div className="grid h-full w-[573px] grid-cols-[repeat(16,minmax(0,1fr))] pl-[1px]">
          {Array.from({ length: 16 }, (_, i) => (
            <div key={i} className="flex flex-col justify-between">
              <span>{i * 20}</span>
              <span className="h-[15px] border-l-2 border-black" />
            </div>
          ))}
        </div>
        <span className="absolute top-0 bottom-0 left-[3px] w-px bg-[#d02a2a]" />
        <span className="absolute top-0 bottom-0 left-[19px] w-px bg-[#d02a2a]" />
        <span className="absolute bottom-[2px] left-[39px] text-[11px] text-white">21</span>
      </div>
    </div>
  );
}

function BottomBars() {
  return (
    <>
      <TimeSlider />
      <div className="flex h-[31px] shrink-0 items-center border-t border-[#363636] text-[11px] text-[#d0d0d0]">
        <VGrip />
        <input aria-label="Start time" defaultValue="1.00" className="h-[19px] w-[68px] rounded-[2px] bg-[#2b2b2b] px-[4px]" />
        <input aria-label="Range start" defaultValue="1.00" className="ml-[4px] h-[19px] w-[68px] rounded-[2px] bg-[#2b2b2b] px-[4px]" />
        <div className="ml-[4px] flex h-[23px] flex-1 items-stretch border-t-2 border-l-4 border-[#2b2b2b] bg-[#646464] pl-[6px]">
          <span className="my-auto mr-[5px] h-[13px] w-[9px] border-r border-b border-[#222]" />
          <span className="my-auto">1</span>
        </div>
      </div>
      <div className="flex h-[31px] shrink-0 items-center border-t border-[#363636] text-[10px] text-[#d0d0d0]">
        <VGrip />
        <label htmlFor="mel" className="w-[46px] pl-[10px]">MEL</label>
        <input id="mel" className="h-[25px] flex-1 bg-[#2b2b2b] px-1" />
      </div>
      <div className="flex h-[28px] shrink-0 items-center border-t border-[#363636]">
        <VGrip />
        <div className="flex h-[23px] flex-1 items-center border border-[#2e2e2e] border-b-[#666] pl-[11px] text-[10px] text-[#d0d0d0]">
          Move Keys Tool: LMB to select keys; MMB to move keys
        </div>
      </div>
    </>
  );
}

/* ---------- graph editor ---------- */

const Key = ({ x, y, r = 0 }: { x: number; y: number; r?: number }) => (
  <g transform={`translate(${x} ${y}) rotate(${r})`} stroke="#b5a03c" strokeWidth={1.300}>
    <circle r={3} />
    <path d="M3 0H12M8 0V3M11 0V3" />
  </g>
);

const dot = (x: number, y: number) => <path d={`M${x - 1.500} ${y - 1.500}h3v3h-3z`} fill="#333" stroke="#e9e56a" />;

const geLeft: [string, React.ReactNode][] = [
  ["Move Nearest Picked Key", <g><g opacity={0.500}><Key x={7} y={6} r={90} /></g><Key x={14} y={6} r={90} /><path d="M3 12H20M17 9L21 12L17 15" stroke="#d02a2a" strokeWidth={1.500} /></g>],
  ["Insert Keys", <g><Key x={6} y={7} /><path d="M3 21V15M7 21V17M11 21V14" stroke="#3d9f46" /><path d="M15 21V16M19 21V14M3 21H21" stroke="#d02a2a" /></g>],
  ["Add Keys", <g><Key x={16} y={8} r={90} /><path d="M6 2V9M2.500 5.500H9.500" stroke="#fff" strokeWidth={3} /><path d="M6 3V8M3.500 5.500H8.500" stroke="#c22" strokeWidth={1} /></g>],
  ["Lattice Deform Keys", <g><path d="M6 3H21L17 20H2ZM4 11H19M13 3L9 20" stroke="#7fb2cc" strokeWidth={1.300} /><Key x={7} y={11} /></g>],
  ["Region Tool", <g><path d="M3 4H20V14H3Z" stroke="#cfcfcf" strokeDasharray="2 1.500" /><RedArrow x={13} y={9} k={0.850} /></g>],
];

const geMid: [string, React.ReactNode][] = [
  ["Frame All", <g><path d="M4 4H20V20H4Z" fill="#444" stroke="#eee" strokeWidth={1.500} /><path d="M6 7H15V11H6ZM8 13H18V17H8Z" fill="#5ea3c9" /></g>],
  ["Frame Playback Range", <g><path d="M2 14H22M5 14V9M9 14V11M18 14V9" stroke="#101010" strokeWidth={1.500} /><path d="M10 4H17V20H10Z" fill="#b9b04a" stroke="#e6e2a4" /></g>],
  ["Center View", <g><path d="M3 5H21V18H3Z" fill="#f0f0f0" /><path d="M3 5H21V9H3Z" fill="#5b9ccc" /><path d="M12 3V13" stroke="#d02a2a" /><circle cx={12} cy={16} r={4} fill="#dce9f2" stroke="#345" /><path d="M12 14V16.500H14" stroke="#345" /></g>],
];

const geTan: [string, React.ReactNode][] = [
  ["Auto Tangents", <g><path d="M3 4H21" stroke="#eee" strokeWidth={1.500} /><path d="M4 20C8 18 8 4 12 4C16 4 16 18 20 20" stroke="#6c9dba" strokeWidth={1.500} /><path d="M9.500 20L12 13L14.500 20M10.500 17.500H13.500" stroke="#fff" strokeWidth={1.500} />{dot(12, 4)}</g>],
  ["Spline Tangents", <g><path d="M5 18C5 8 9 12 12 11C17 10 18 10 18 5" stroke="#7ca9c4" strokeWidth={1.300} />{dot(5, 18)}{dot(9, 11)}{dot(14, 11)}{dot(19, 4)}</g>],
  ["Clamped Tangents", <g><path d="M5 15H12C17 15 18 13 19 8" stroke="#7ca9c4" strokeWidth={1.300} />{dot(5, 15)}{dot(12, 15)}{dot(19, 8)}</g>],
  ["Linear Tangents", <g><path d="M4 4L20 20" stroke="#8aa6b8" strokeWidth={1.300} />{dot(4, 4)}</g>],
  ["Flat Tangents", <g><path d="M4 12H20" stroke="#7ca9c4" strokeWidth={1.300} />{dot(4, 12)}{dot(20, 12)}</g>],
  ["Step Tangents", <g><path d="M4 15H12V8H21" stroke="#7ca9c4" strokeWidth={1.300} />{dot(4, 15)}{dot(12, 15)}</g>],
  ["Plateau Tangents", <g><path d="M4 15C5 8 7 8 12 8C17 8 19 8 20 15" stroke="#7ca9c4" strokeWidth={1.300} />{dot(4, 15)}{dot(8, 8)}{dot(16, 8)}{dot(20, 15)}</g>],
];

const channels: [string, string, string][] = [
  ["Visibility", "text-[#c4c4bc]", "bg-[#c4c4c4]"],
  ["Translate X", "text-[#c8161c]", "bg-[#d8161c]"],
  ["Translate Y", "text-[#1fd12a]", "bg-[#1fd12a]"],
  ["Translate Z", "text-[#4f86e8]", "bg-[#5a8ff0]"],
  ["Rotate X", "text-[#c8161c]", "bg-[#d8161c]"],
  ["Rotate Y", "text-[#1fd12a]", "bg-[#1fd12a]"],
  ["Rotate Z", "text-[#4f86e8]", "bg-[#5a8ff0]"],
  ["Scale X", "text-[#c8161c]", "bg-[#d8161c]"],
  ["Scale Y", "text-[#1fd12a]", "bg-[#1fd12a]"],
  ["Scale Z", "text-[#4f86e8]", "bg-[#5a8ff0]"],
];

function CurveView() {
  const vals = [180, 160, 140, 120, 100, 80, 60, 40, 20, 0, -20, -40, -60, -80];
  const yOf = (v: number) => 570 - (v / 20) * 32.450;
  return (
    <svg className="h-full min-w-0 flex-1 bg-[#5e5e5e]" viewBox="831 275 417 427" preserveAspectRatio="xMinYMin slice" fill="none" role="img" aria-label="Animation curves">
      <g stroke="#505050" shapeRendering="crispEdges">
        {vals.map((v) => <path key={v} d={`M831 ${Math.round(yOf(v))}.5H1260`} />)}
        {Array.from({ length: 11 }, (_, i) => <path key={i} d={`M${Math.round(843 + i * 37.450)}.5 275V710`} />)}
      </g>
      <path d="M1029.500 275V702" stroke="#8c8c8c" />
      <g fontSize="9" fill="#0b0b0b">
        {vals.map((v) => <text key={v} x="835" y={Math.round(yOf(v)) + 1}>{v}</text>)}
      </g>
      <path d="M831 570.500H1030" stroke="#5a8ed8" strokeWidth={2} />
      <path d="M1060 570.500H1248" stroke="#2f9e2f" strokeWidth={2} />
      <path d="M831 569.500H1248" stroke="#f4e4c8" />
      <path d="M831 569.500H1248" stroke="#d81c1c" strokeDasharray="4 2" />
      <path d="M1033 569L1061.500 348" stroke="#fff" strokeWidth={1.300} />
      <path d="M1061.500 348L1070.500 275" stroke="#5a92d8" strokeWidth={1.300} strokeDasharray="4 2" />
      <g stroke="#e01ee0">
        <path d="M1061.500 348.500H1097" strokeWidth={1.500} />
        <path d="M1061.500 348L1057 384" strokeWidth={1.500} strokeDasharray="5 2" />
        <path d="M1034 569L1037.500 535" strokeWidth={1.500} strokeDasharray="5 2" />
        <path d="M996 569.500H1032" strokeWidth={2} strokeDasharray="4 3" />
        <path d="M1034 569.500H1061" strokeWidth={4} />
        <path d="M1066 569.500H1098" strokeWidth={2} strokeDasharray="4 3" />
      </g>
      <path d="M1095 347H1098V350H1095ZM1056 383H1058.500V386H1056ZM1036 534H1038.500V537H1036ZM996 568H999V571H996Z" fill="#e01ee0" />
      <path d="M1095 275V702" stroke="#c9221c" strokeWidth={1.300} />
      <path d="M1060.500 347.500H1062.500V349.500H1060.500ZM1060.500 568.500H1062.500V570.500H1060.500ZM1032.500 568.500H1034.500V570.500H1032.500Z" stroke="#e9d92c" />
      <path d="M961.500 344.500H970.500V353.500H961.500Z" stroke="#111" strokeWidth={3} />
      <path d="M961.500 344.500H970.500V353.500H961.500Z" stroke="#fff" strokeWidth={1.300} />
      <path d="M967 350V360L970 358L974 362.500L977 360L973 356.500L976 354.500Z" fill="#fff" stroke="#222" strokeWidth={0.800} />
    </svg>
  );
}

function IconRow({ items, active }: { items: [string, React.ReactNode][]; active?: string }) {
  return (
    <>
      {items.map(([n, g]) => (
        <button key={n} type="button" aria-label={n} className={`flex h-[25px] w-[27px] shrink-0 items-center justify-center rounded-sm ${n === active ? "border border-[#333] bg-[#4f5356]" : ""}`}>
          <Ico s={24}>{g}</Ico>
        </button>
      ))}
    </>
  );
}

function GraphEditor() {
  const sep = "h-[26px] w-px shrink-0 bg-[#c9c9c9]";
  const stat = "h-[20px] shrink-0 rounded-[2px] border border-[#7d5f80] bg-[#bd9ac0] px-[3px] text-[9px] text-[#3c2440]";
  return (
    <section aria-label="Graph Editor" className="absolute top-[176px] right-0 bottom-0 left-[576px] flex flex-col rounded-tl-md border-t-2 border-l-2 border-t-[#aebfca] border-l-[#cdd8df] bg-[linear-gradient(to_bottom,#9fb0bc_0px,#b7c4cc_180px,#34434f_188px,#24313b_340px,#4b5d6c_400px,#27333c_100%)] shadow-[-3px_-2px_8px_rgba(0,0,0,0.55)]">
      <header className="flex h-[26px] shrink-0 items-center rounded-tl-md bg-[linear-gradient(to_right,#7d8a93_0px,#8f999f_70px,#7a8b99_110px,#5b7d9e_176px,#45586a_186px,#33434f_240px,#34434f_460px,#3d4b56_540px,#66747d_600px,#4c5b66_100%)] pb-[3px]">
        <span className="ml-[6px] bg-[#20262b]"><MayaLogo s={14} /></span>
        <h2 className="ml-[6px] font-['Noto_Sans',sans-serif] text-[12px] text-black [text-shadow:0_0_6px_#d5dde2,0_0_8px_#d5dde2]">Graph Editor</h2>
        <div className="ml-auto flex h-[17px] self-start overflow-hidden">
          <button type="button" aria-label="Minimize" className="flex w-[28px] items-center justify-center rounded-bl-md border border-t-0 border-[#d9e2e8] bg-[#75828e]">
            <Ico s={12} v={12}><path d="M1 4H11V8H1Z" fill="#fff" stroke="#444" strokeWidth={0.800} /></Ico>
          </button>
          <button type="button" aria-label="Maximize" className="flex w-[12px] items-center justify-end border-b border-[#d9e2e8] bg-[#75828e]">
            <svg width="6" height="12" viewBox="0 0 6 12" fill="none" aria-hidden="true"><path d="M7 2H1V10H7" stroke="#fff" strokeWidth={2} /></svg>
          </button>
        </div>
      </header>
      <div className="ml-[4px] flex min-h-0 flex-1 flex-col border-t-2 border-l-2 border-[#a8b3ba] bg-[#444] pl-[2px]">
        <nav className="flex h-[20px] shrink-0 items-center gap-[14px] border-b border-[#333] pl-[6px] text-[11px] text-[#c8c8c8]">
          {["Edit", "View", "Select", "Curves", "Keys", "Tangents", "List", "Show", "Help"].map((t) => (
            <button key={t} type="button">{t}</button>
          ))}
        </nav>
        <div className="flex h-[31px] shrink-0 items-center overflow-hidden border-b border-[#2e2e2e] pb-px pl-[3px]">
          {geLeft.map(([n, g]) => (
            <button key={n} type="button" aria-label={n} className="mr-[3px] flex h-[25px] w-[24px] shrink-0 items-center justify-center rounded-[2px] border border-[#2b2b2b] bg-[#444] outline outline-[#585858] -outline-offset-2">
              <Ico s={22}>{g}</Ico>
            </button>
          ))}
          <span className={sep} />
          <label htmlFor="stat-time" className="w-[35px] shrink-0 pl-[2px] text-[11px] text-[#c8c8c8]">Stats</label>
          <input id="stat-time" defaultValue="10" className={`${stat} w-[64px]`} />
          <input aria-label="Value" defaultValue="136.999" className={`${stat} ml-[5px] w-[68px]`} />
          <span className={`${sep} ml-[2px]`} />
          <IconRow items={geMid} />
          <span className={`${sep} ml-[2px]`} />
          <IconRow items={geTan} active="Linear Tangents" />
          <span className={sep} />
          <button type="button" aria-label="Buffer Curve Snapshot" className="w-[20px] shrink-0"><Ico s={20}><path d="M3 7C9 0 18 4 17 14M13 12L17 16L20 11" stroke="#c33" strokeWidth={1.300} /><path d="M3 7C9 2 14 4 16 9" stroke="#3f9d8c" strokeWidth={1.500} /><path d="M3 21C5 15 9 12 14 12" stroke="#3f9d46" strokeWidth={2} /></Ico></button>
          <button type="button" aria-label="Break Tangents" className="w-[24px] shrink-0"><Ico s={24}><path d="M3 3V20H22" stroke="#111" strokeWidth={1.500} /><path d="M3 19C10 16 12 8 20 4" stroke="#5b8fc0" strokeWidth={1.500} /><path d="M12 3V20M4 12H21M9 6L12 9L15 6M9 18L12 15L15 18" stroke="#d02a2a" strokeWidth={1.500} />{dot(12, 12)}</Ico></button>
        </div>
        <div className="flex min-h-0 flex-1">
          <div className="flex w-[206px] shrink-0 flex-col">
            <div className="flex h-[25px] shrink-0 items-start gap-[6px] pt-px">
              <Ico s={18} v={18}><path d="M4 3H7M4 3V7M12 3H15V7M4 12V16H7M12 16H15V12" stroke="#5e5e5e" strokeWidth={1.500} strokeDasharray="2 1" /></Ico>
              <input aria-label="Search" className="h-[18px] min-w-0 flex-1 rounded-[2px] bg-[#2b2b2b] px-1" />
            </div>
            <div className="flex min-h-0 flex-1">
              <ul className="flex-1 overflow-hidden bg-[#2b2b2b] text-[11px] leading-[20px]">
                <li className="flex h-[20px] items-center bg-[#6591b8] text-white">
                  <span className="ml-[3px] flex gap-[5px]">
                    <Ico s={12} v={12}><path d="M.5.5H11.500V11.500H.5ZM2 6H10M6 2V10" stroke="#111" /></Ico>
                    <Ico s={12} v={12}><circle cx={6} cy={6} r={5} stroke="#23303b" /><path d="M3 6H9" stroke="#111" strokeWidth={1.500} /></Ico>
                  </span>
                  <span className="ml-[10px]"><Ico s={22} v={22}><path d="M1 11L9 5L21 9L14 17Z" fill="#bdbdbd" stroke="#222" /><path d="M5 8L18 13M13 6.500L7 14M17 8L10.500 15.500M1 11L14 6.500M5 13L20 9.500M9 5L14 17" stroke="#222" strokeWidth={0.800} /></Ico></span>
                  <span className="ml-[9px]">pSphere2</span>
                </li>
                {channels.map(([n, tc, bc]) => (
                  <li key={n} className="flex h-[20px] items-center">
                    <span className="ml-[4px] w-[77px]"><Ico s={13} v={13}><path d="M9 4L12.500 .5" stroke="#7f9a82" /><path d="M1 9L4 12M3 10L8 5M7 3L10 6" stroke="#c4dcc6" strokeWidth={1.800} /></Ico></span>
                    <span className={`size-[7px] border border-[#d5d5d5] ${bc}`} />
                    <span className={`ml-[5px] ${tc}`}>{n}</span>
                  </li>
                ))}
              </ul>
              <div className="flex w-[16px] justify-center border-l border-[#222] bg-[#2f2f2f]">
                <Ico s={16} v={16}><path d="M0 0H16V16H0Z" fill="#222" /><path d="M4 9L8 5L12 9Z" fill="#eee" /></Ico>
              </div>
            </div>
          </div>
          <div className="w-[7px] shrink-0 border-r border-[#333]">
            <span className="mt-[200px] ml-[3px] block h-[194px] w-[4px] bg-[radial-gradient(#666_1px,transparent_1px)] bg-[length:4px_4px]" />
          </div>
          <CurveView />
        </div>
      </div>
    </section>
  );
}

/* ---------- main window ---------- */

const menus = ["File", "Edit", "Modify", "Create", "Display", "Window", "Assets", "Animate", "Geometry Cache", "Create Deformers", "Edit Deformers", "Skeleton", "Skin", "Constrain", "Character", "Muscle", "Help"];

function TitleBar() {
  const b = "flex items-center justify-center border border-t-0 border-[#707070] bg-[#15181b]";
  return (
    <header className="flex h-[21px] shrink-0 items-center justify-between border-b border-[#b5bcc0] bg-[#05090d]">
      <div className="flex h-full items-center rounded-r-full bg-[linear-gradient(to_right,#3c3c3c_0px,#707070_40px,#6b6b6b_240px,#4a4a4a_290px,#05090d_100%)] pr-[14px]">
        <span className="ml-[2px] bg-[#1d2327]"><MayaLogo s={14} /></span>
        <h1 className="ml-[5px] pt-px font-['Noto_Sans',sans-serif] text-[12px] whitespace-pre text-black">Autodesk Maya 2012 x64: untitled*  ---   pSphere2...</h1>
      </div>
      <div className="mr-[3px] flex h-[18px] self-start">
        <button type="button" aria-label="Minimize" className={`${b} w-[28px] rounded-bl-md`}><Ico s={12} v={12}><path d="M1 7H11V10H1Z" fill="#fff" /></Ico></button>
        <button type="button" aria-label="Restore" className={`${b} w-[27px]`}><Ico s={12} v={12}><path d="M3 1H11V8M1.500 4H8.500V10.500H1.500Z" stroke="#fff" strokeWidth={2} /></Ico></button>
        <button type="button" aria-label="Close" className={`${b} w-[47px] rounded-br-md`}><Ico s={12} v={12}><path d="M2 2.500L10 9.500M10 2.500L2 9.500" stroke="#fff" strokeWidth={2.500} /></Ico></button>
      </div>
    </header>
  );
}

export default function App() {
  return (
    <div className="h-screen bg-black px-8 py-[18px] font-['DejaVu_Sans_Condensed','Liberation_Sans',sans-serif]">
      <svg width="0" height="0" className="absolute" aria-hidden="true">
        <defs>
          <radialGradient id="khaki" cx="0.350" cy="0.300" r="0.800"><stop offset="0" stopColor="#d8cf9d" /><stop offset="0.600" stopColor="#938a5b" /><stop offset="1" stopColor="#4a4429" /></radialGradient>
          <linearGradient id="khakiH"><stop offset="0" stopColor="#8f8658" /><stop offset="0.350" stopColor="#c4ba88" /><stop offset="1" stopColor="#5a5333" /></linearGradient>
          <linearGradient id="blueV" x2="0" y2="1"><stop offset="0" stopColor="#b3dcf5" /><stop offset="1" stopColor="#3879ae" /></linearGradient>
          <radialGradient id="blueR" cx="0.380" cy="0.300" r="0.750"><stop offset="0" stopColor="#b9dcf6" /><stop offset="0.500" stopColor="#4b8cc8" /><stop offset="1" stopColor="#1c4a7a" /></radialGradient>
          <radialGradient id="grayR" cx="0.400" cy="0.300" r="0.750"><stop offset="0" stopColor="#dcdcdc" /><stop offset="1" stopColor="#666" /></radialGradient>
          <radialGradient id="gold" cx="0.380" cy="0.300" r="0.750"><stop offset="0" stopColor="#f4e3a4" /><stop offset="0.500" stopColor="#a8843a" /><stop offset="1" stopColor="#3b2c10" /></radialGradient>
          <radialGradient id="sun"><stop offset="0" stopColor="#fff44a" /><stop offset="0.500" stopColor="#e8de1e" /><stop offset="1" stopColor="#444" stopOpacity="0" /></radialGradient>
        </defs>
      </svg>
      <main className="relative flex h-full flex-col overflow-hidden bg-[#444]">
        <TitleBar />
        <nav className="flex h-[20px] shrink-0 items-center gap-[13px] pt-[2px] pl-[8px] text-[11px] whitespace-nowrap text-[#c8c8c8]">
          {menus.map((m) => (
            <button key={m} type="button">{m}</button>
          ))}
        </nav>
        <StatusLine />
        <Shelf />
        <div className="flex min-h-0 flex-1 pt-px">
          <Toolbox />
          <PanelArea />
          <ChannelBox />
        </div>
        <BottomBars />
        <GraphEditor />
      </main>
    </div>
  );
}
